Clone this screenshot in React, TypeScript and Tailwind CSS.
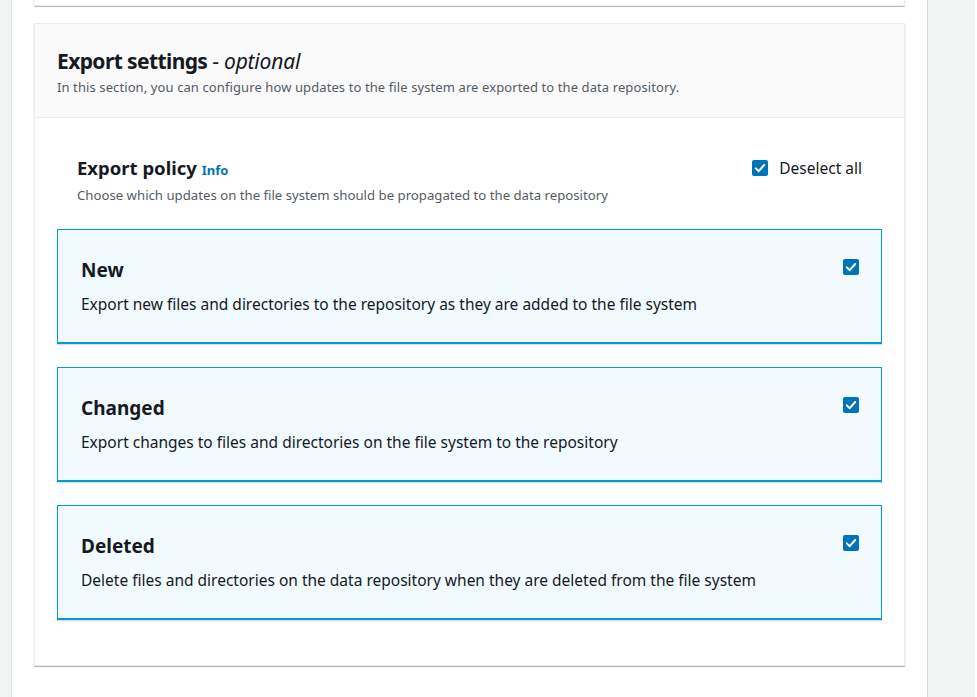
import { useState } from 'react'

type Option = { id: string; title: string; description: string }

const options: Option[] = [
  {
    id: 'new',
    title: 'New',
    description:
      'Export new files and directories to the repository as they are added to the file system'
  },
  {
    id: 'changed',
    title: 'Changed',
    description:
      'Export changes to files and directories on the file system to the repository'
  },
  {
    id: 'deleted',
    title: 'Deleted',
    description:
      'Delete files and directories on the data repository when they are deleted from the file system'
  }
]

function Checkbox({ checked }: { checked: boolean }) {
  return (
    <span
      className={
        checked
          ? 'flex h-4 w-4 items-center justify-center rounded-[2px] bg-[#0073bb]'
          : 'flex h-4 w-4 items-center justify-center rounded-[2px] border-2 border-[#aab7b8] bg-white'
      }
    >
      {checked && (
        <svg viewBox="0 0 16 16" className="h-4 w-4" aria-hidden="true">
          <path
            d="M3.8 8.4 6.7 11.2 12.2 5"
            fill="none"
            stroke="white"
            strokeWidth="2"
            strokeLinecap="round"
            strokeLinejoin="round"
          />
        </svg>
      )}
    </span>
  )
}

export default function App(): JSX.Element {
  const [selected, setSelected] = useState<Record<string, boolean>>({
    new: true,
    changed: true,
    deleted: true
  })
  const allOn = Object.values(selected).every(Boolean)

  return (
    <div
      className="flex h-[697px] w-[977px] overflow-hidden bg-white text-[#16191f]"
      style={{ fontFamily: '"Noto Sans", "Open Sans", sans-serif' }}
    >
      <div className="w-[12px] shrink-0 border-r border-[#dfe3e3] bg-[#f2f3f3]" />

      <main className="flex-1 px-[22px]">
        {/* tail of the previous section */}
        <div className="h-[6px] rounded-b-[1px] border-x border-b border-[#eaeded] bg-white shadow-[0_1px_1px_0_rgba(0,28,36,0.3)]" />

        <section className="mt-[17px] border border-[#eaeded] bg-white shadow-[0_1px_1px_0_rgba(0,28,36,0.3)]">
          <header className="border-b border-[#eaeded] bg-[#fafafa] px-[22px] pt-[25px] pb-[21px]">
            <h2 className="text-[21px] leading-[24px] font-bold tracking-[-0.6px]">
              Export settings{' '}
              <span className="font-normal tracking-[-0.2px]">
                - <i>optional</i>
              </span>
            </h2>
            <p className="mt-[5px] text-[13px] leading-[18px] tracking-[0.1px] text-[#545b64]">
              In this section, you can configure how updates to the file system are exported to the data repository.
            </p>
          </header>

          <div className="px-[22px] pt-[38px] pb-[45px]">
            <div className="flex items-start justify-between px-[20px]">
              <div>
                <h3 className="text-[18.5px] leading-[24px] font-bold">
                  Export policy{' '}
                  <a className="text-[13px] font-bold text-[#0073bb]">Info</a>
                </h3>
                <p className="mt-[4px] text-[13.2px] leading-[18px] text-[#545b64]">
                  Choose which updates on the file system should be propagated to the data repository
                </p>
              </div>
              <button
                type="button"
                onClick={() =>
                  setSelected({ new: !allOn, changed: !allOn, deleted: !allOn })
                }
                className="mt-[2px] flex items-center gap-[11px] text-[15.5px] leading-[20px]"
              >
                <Checkbox checked={allOn} />
                Deselect all
              </button>
            </div>

            <div className="mt-[25px] flex flex-col gap-[23px]">
              {options.map((o) => (
                <label
                  key={o.id}
                  className="flex items-start justify-between border border-b-2 border-[#00a1c9] bg-[#f1faff] pt-[28px] pr-[22px] pb-[28px] pl-[23px] shadow-[0_1px_1px_0_rgba(0,28,36,0.15)]"
                  onClick={() => setSelected({ ...selected, [o.id]: !selected[o.id] })}
                >
                  <div>
                    <div className="text-[19px] leading-[24px] font-bold">{o.title}</div>
                    <div className="mt-[12px] text-[15.5px] leading-[20px]">{o.description}</div>
                  </div>
                  <span className="pt-[1px]">
                    <Checkbox checked={selected[o.id]} />
                  </span>
                </label>
              ))}
            </div>
          </div>
        </section>
      </main>

      <div className="w-[48px] shrink-0 border-l border-[#d5dbdb] bg-[#f2f3f3]" />
      <div className="w-[2px] shrink-0 bg-white" />
    </div>
  )
}
